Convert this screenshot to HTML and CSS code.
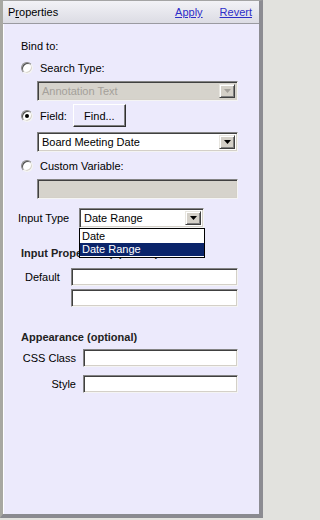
FILE: index.html
```html
<!DOCTYPE html>
<html>
<head>
<meta charset="utf-8">
<link rel="stylesheet" href="styles.css">
</head>
<body>
<div class="frame">
  <div class="panel">
    <div class="header">
      <span class="title">P<u>r</u>operties</span>
      <div class="links"><a href="#">Apply</a><a href="#">Revert</a></div>
    </div>
    <div class="content">
      <div class="text-row bind">Bind to:</div>
      <div class="radio-row r-search"><span class="radio"></span><span class="radio-label">Search Type:</span></div>
      <div class="combo disabled indent c-search">
        <span class="combo-text">Annotation Text</span>
        <span class="combo-btn"><svg width="7" height="4" viewBox="0 0 7 4"><path d="M0 0H7L3.5 4Z"/></svg></span>
      </div>
      <div class="radio-row r-field">
        <span class="radio checked"></span><span class="radio-label">Field:</span>
        <span class="button">Find...</span>
      </div>
      <div class="combo indent c-field">
        <span class="combo-text">Board Meeting Date</span>
        <span class="combo-btn"><svg width="7" height="4" viewBox="0 0 7 4"><path d="M0 0H7L3.5 4Z"/></svg></span>
      </div>
      <div class="radio-row r-custom"><span class="radio"></span><span class="radio-label">Custom Variable:</span></div>
      <div class="textbox disabled indent c-custom"></div>
      <div class="type-row">
        <span class="type-label">Input Type</span>
        <div class="combo c-type">
          <span class="combo-text">Date Range</span>
          <span class="combo-btn"><svg width="7" height="4" viewBox="0 0 7 4"><path d="M0 0H7L3.5 4Z"/></svg></span>
          <div class="dropdown">
            <div class="option">Date</div>
            <div class="option selected">Date Range</div>
          </div>
        </div>
      </div>
      <div class="heading h-input">Input Properties (optional)</div>
      <div class="field-row f-default"><span class="lbl lbl-default">Default</span><div class="textbox tb-default"></div></div>
      <div class="field-row f-second"><div class="textbox tb-default"></div></div>
      <div class="heading h-appear">Appearance (optional)</div>
      <div class="field-row f-css"><span class="lbl lbl-right">CSS Class</span><div class="textbox tb-app"></div></div>
      <div class="field-row f-style"><span class="lbl lbl-right">Style</span><div class="textbox tb-app"></div></div>
    </div>
  </div>
</div>
</body>
</html>
```
FILE: styles.css
```css
html, body {
  margin: 0;
  padding: 0;
  background: #e2e2de;
}
body {
  font-family: "Liberation Sans", Arial, sans-serif;
  font-size: 11px;
  color: #000;
}
.frame {
  width: 264px;
  height: 520px;
}
.panel {
  width: 263px;
  height: 518px;
  box-sizing: border-box;
  background: #eceafc;
  border-top: 1px solid #a4a4a4;
  border-left: 3px solid #a8a8a2;
  border-right: 4px solid #8c8c92;
  border-bottom: 4px solid #8a8a90;
  box-shadow: inset 1px 0 0 #ffffff;
}
.header {
  height: 22px;
  border-bottom: 1px solid #9a9aa0;
  background: linear-gradient(#f2f2f6, #dcdce4);
  display: flex;
  align-items: center;
  justify-content: space-between;
  padding: 0 7px 0 5px;
}
.title u { text-decoration: underline; }
.links { display: flex; gap: 17px; }
.links a {
  color: #2d2dc8;
  text-decoration: underline;
}
.content {
  padding-left: 18px;
  position: relative;
}
.text-row, .radio-row, .heading {
  height: 14px;
  line-height: 14px;
}
.bind { margin-top: 15px; }
.radio-row {
  display: flex;
  align-items: center;
}
.radio {
  width: 12px;
  height: 12px;
  box-sizing: border-box;
  border-radius: 50%;
  background: #fff;
  border: 1px solid;
  border-color: #8a8a8a #f4f4f4 #f4f4f4 #8a8a8a;
  box-shadow: inset 1px 1px 0 #505050, inset -1px -1px 0 #d8d4cc;
  position: relative;
  flex: none;
}
.radio.checked::after {
  content: "";
  position: absolute;
  left: 3px;
  top: 3px;
  width: 4px;
  height: 4px;
  border-radius: 50%;
  background: #000;
}
.radio-label { margin-left: 7px; }
.r-search { margin-top: 8px; }
.indent { margin-left: 16px; }
.combo {
  width: 201px;
  height: 20px;
  box-sizing: border-box;
  background: #fff;
  border: 1px solid;
  border-color: #848484 #f4f4f4 #f4f4f4 #848484;
  box-shadow: inset 1px 1px 0 #404040, inset -1px -1px 0 #d4d0c8;
  display: flex;
  align-items: center;
  padding: 2px;
  position: relative;
}
.combo-text {
  flex: 1;
  padding-left: 2px;
  white-space: nowrap;
}
.combo-btn {
  width: 16px;
  height: 100%;
  box-sizing: border-box;
  background: #d4d0c8;
  border: 1px solid;
  border-color: #e8e6e0 #404040 #404040 #e8e6e0;
  box-shadow: inset 1px 1px 0 #ffffff, inset -1px -1px 0 #808080;
  display: flex;
  align-items: center;
  justify-content: center;
}
.combo-btn svg { fill: #000; display: block; }
.combo.disabled { background: #d6d3cc; }
.combo.disabled .combo-text { color: #a4a09a; }
.combo.disabled .combo-btn svg { fill: #a4a09a; }
.c-search { margin-top: 6px; }
.r-field { margin-top: 3px; height: 23px; }
.button {
  margin-left: 6px;
  width: 53px;
  height: 23px;
  box-sizing: border-box;
  border: 1px solid;
  border-color: #ffffff #303030 #303030 #ffffff;
  box-shadow: inset -1px -1px 0 #808080;
  display: flex;
  align-items: center;
  justify-content: center;
  background: #eceafc;
}
.c-field { margin-top: 5px; }
.r-custom { margin-top: 7px; }
.textbox {
  height: 18px;
  box-sizing: border-box;
  background: #fff;
  border: 1px solid;
  border-color: #848484 #f4f4f4 #f4f4f4 #848484;
  box-shadow: inset 1px 1px 0 #404040, inset -1px -1px 0 #d4d0c8;
}
.c-custom {
  width: 201px;
  height: 20px;
  margin-top: 6px;
}
.textbox.disabled { background: #d6d3cc; }
.type-row {
  display: flex;
  align-items: center;
  margin-top: 9px;
  margin-left: -3px;
  height: 20px;
}
.type-label { width: 61px; }
.c-type { width: 125px; }
.dropdown {
  position: absolute;
  left: -1px;
  top: 19px;
  width: 126px;
  box-sizing: border-box;
  background: #fff;
  border: 1px solid #000;
  padding: 1px 0;
  z-index: 2;
}
.option {
  height: 13px;
  line-height: 13px;
  padding-left: 2px;
}
.option.selected {
  background: #0a246a;
  color: #fff;
}
.heading { font-weight: bold; color: #222; }
.h-input { margin-top: 18px; }
.field-row {
  display: flex;
  align-items: center;
  height: 18px;
}
.f-default { margin-top: 8px; }
.f-second { margin-top: 3px; padding-left: 50px; }
.lbl-default { margin-left: 4px; width: 46px; }
.tb-default { width: 167px; }
.h-appear { margin-top: 23px; }
.f-css { margin-top: 5px; }
.f-style { margin-top: 8px; }
.lbl-right {
  width: 55px;
  text-align: right;
  margin-right: 7px;
}
.tb-app { width: 155px; }
```
